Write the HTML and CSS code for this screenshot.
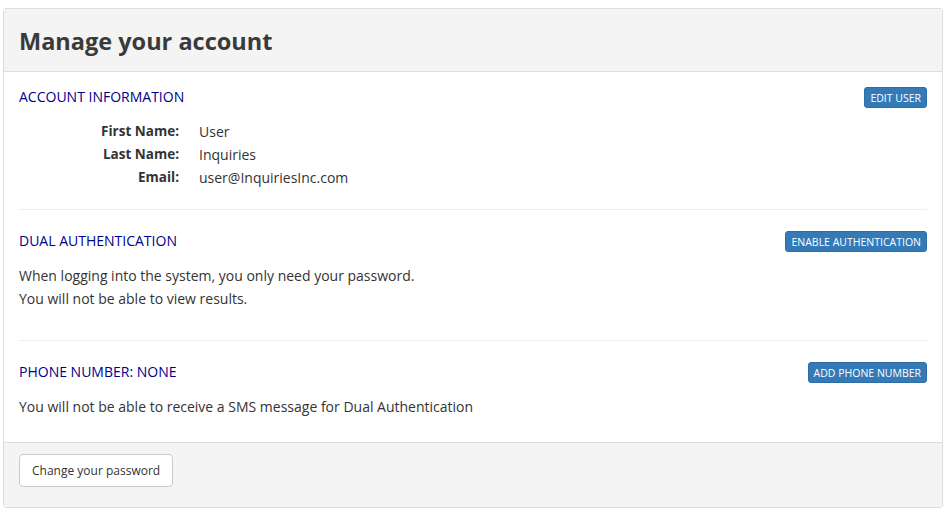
FILE: index.html
```html
<!DOCTYPE html>
<html>
<head>
  <title>Manage your account</title>
  <link rel="stylesheet" href="styles.css">
</head>
<body>

  <!--ACCOUNT PANEL-->
  <div class="panel">
    <div class="panel-heading">
      <h1 class="panel-title">Manage your account</h1>
    </div>

    <div class="panel-body">

      <!-- Account information -->
      <div class="section">
        <div class="section-head">
          <h2 class="section-title">ACCOUNT INFORMATION</h2>
          <button class="btn-primary">EDIT USER</button>
        </div>
        <div class="field-list">
          <div class="field-label">First Name:</div>
          <div class="field-value">User</div>
          <div class="field-label">Last Name:</div>
          <div class="field-value">Inquiries</div>
          <div class="field-label">Email:</div>
          <div class="field-value">user@InquiriesInc.com</div>
        </div>
      </div>

      <!-- Dual authentication -->
      <div class="section">
        <div class="section-head">
          <h2 class="section-title">DUAL AUTHENTICATION</h2>
          <button class="btn-primary">ENABLE AUTHENTICATION</button>
        </div>
        <p class="section-text">
          When logging into the system, you only need your password.<br>
          You will not be able to view results.
        </p>
      </div>

      <!-- Phone number -->
      <div class="section last">
        <div class="section-head">
          <h2 class="section-title">PHONE NUMBER: NONE</h2>
          <button class="btn-primary">ADD PHONE NUMBER</button>
        </div>
        <p class="section-text">You will not be able to receive a SMS message for Dual Authentication</p>
      </div>

    </div>

    <div class="panel-footer">
      <button class="btn-default">Change your password</button>
    </div>
  </div>

</body>
</html>
```

FILE: styles.css
```css
body {
  margin: 0;
  background-color: #fff;
  font-family: "Open Sans", Arial, sans-serif;
  font-size: 14px;
  color: #333;
}
.panel {
  margin: 8px 2px 0 3px;
  border: 1px solid #ddd;
  border-radius: 3px;
}
.panel-heading {
  height: 62px;
  display: flex;
  align-items: center;
  padding: 0 15px;
  background-color: #f4f4f4;
  border-bottom: 1px solid #ddd;
}
.panel-title {
  margin: 0 0 -2px 0;
  font-size: 23.5px;
  font-weight: bold;
  color: #3a3a3a;
}
.panel-body {
  padding: 15px 15px 0 15px;
}
/* Each block of the account page */
.section {
  border-bottom: 1px solid #eee;
  padding-bottom: 20px;
  margin-bottom: 21px;
}
.section.last {
  border-bottom: none;
  margin-bottom: 0;
  padding-bottom: 14px;
}
.section-head {
  display: flex;
  justify-content: space-between;
  align-items: center;
  height: 21px;
}
.section-title {
  margin: 0 0 3px 0;
  font-size: 14px;
  font-weight: normal;
  color: #00008b;
}
.btn-primary {
  height: 21px;
  padding: 0 5px;
  font-family: "Open Sans", Arial, sans-serif;
  font-size: 10.5px;
  color: #fff;
  background-color: #337ab7;
  border: 1px solid #2e6da4;
  border-radius: 3px;
  cursor: pointer;
}
.field-list {
  display: grid;
  grid-template-columns: 160px 1fr;
  column-gap: 20px;
  margin-top: 12px;
  line-height: 23px;
}
.field-label {
  text-align: right;
  font-weight: bold;
  font-size: 13.5px;
}
.section-text {
  margin: 12px 0 10px 0;
  line-height: 23px;
}
.panel-footer {
  padding: 11px 15px 20px 15px;
  background-color: #f4f4f4;
  border-top: 1px solid #ddd;
}
.btn-default {
  height: 33px;
  padding: 0 12px;
  font-family: "Open Sans", Arial, sans-serif;
  font-size: 12px;
  color: #333;
  background-color: #fff;
  border: 1px solid #ccc;
  border-radius: 4px;
  cursor: pointer;
}
```
